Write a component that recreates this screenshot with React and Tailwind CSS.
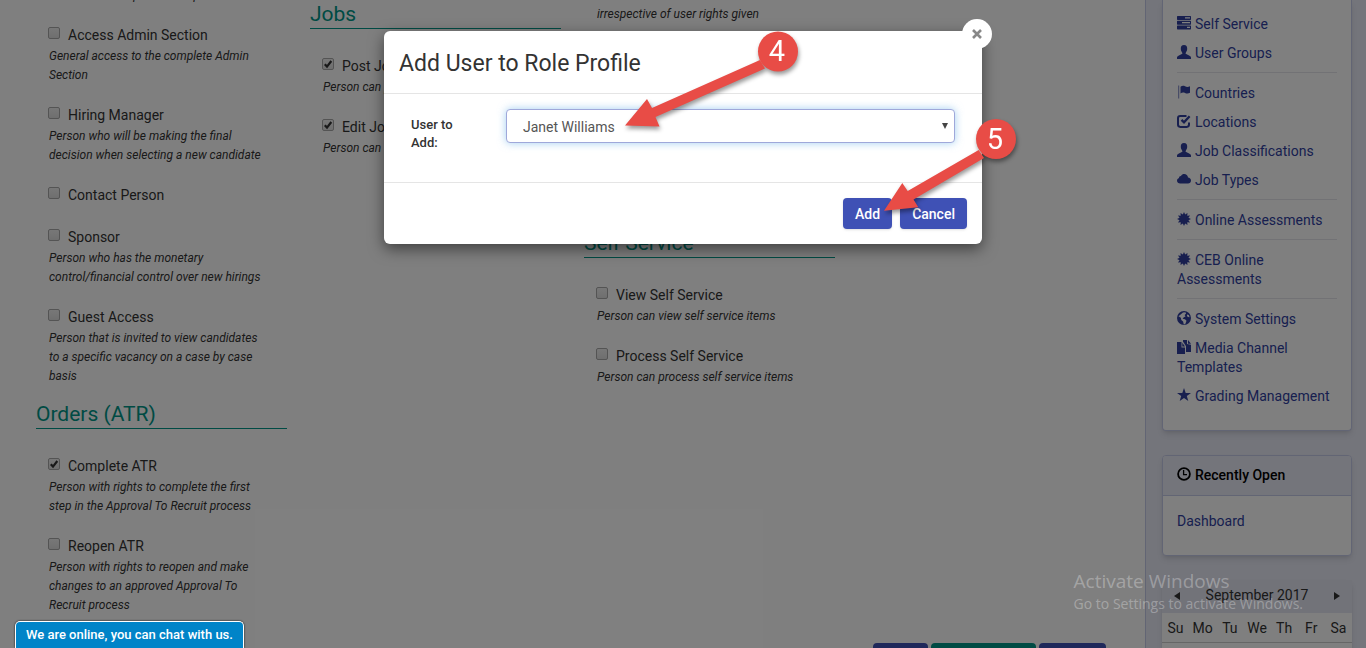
import { useState } from 'react';

const columns = [
  [
    {
      items: [
        { label: 'Report User', hint: ['Person can complete this report'] },
        { label: 'Access Admin Section', hint: ['General access to the complete Admin', 'Section'] },
        { label: 'Hiring Manager', hint: ['Person who will be making the final', 'decision when selecting a new candidate'] },
        { label: 'Contact Person', hint: [] },
        { label: 'Sponsor', hint: ['Person who has the monetary', 'control/financial control over new hirings'] },
        {
          label: 'Guest Access',
          hint: ['Person that is invited to view candidates', 'to a specific vacancy on a case by case', 'basis']
        }
      ]
    },
    {
      title: 'Orders (ATR)',
      items: [
        {
          label: 'Complete ATR',
          checked: true,
          hint: ['Person with rights to complete the first', 'step in the Approval To Recruit process']
        },
        {
          label: 'Reopen ATR',
          hint: ['Person with rights to reopen and make', 'changes to an approved Approval To', 'Recruit process']
        }
      ]
    }
  ],
  [
    { items: [{ label: 'Delete', hint: [] }] },
    {
      title: 'Jobs',
      items: [
        { label: 'Post Jobs', checked: true, hint: ['Person can post jobs'] },
        { label: 'Edit Jobs', checked: true, hint: ['Person can edit jobs'] }
      ]
    }
  ],
  [
    { items: [{ label: 'View All', hint: ['Person can view all records', 'irrespective of user rights given'] }] },
    {
      title: 'Reports',
      items: [
        { label: 'View Reports', hint: ['Person can view reports', 'and export them'] },
        { label: 'Edit Reports', hint: ['Person can edit reports'] }
      ]
    },
    {
      title: 'Self Service',
      items: [
        { label: 'View Self Service', hint: ['Person can view self service items'] },
        { label: 'Process Self Service', hint: ['Person can process self service items'] }
      ]
    }
  ]
];

const menu = [
  [
    { label: 'Self Service', icon: 'tasks' },
    { label: 'User Groups', icon: 'user' }
  ],
  [
    { label: 'Countries', icon: 'flag' },
    { label: 'Locations', icon: 'check' },
    { label: 'Job Classifications', icon: 'user' },
    { label: 'Job Types', icon: 'cloud' }
  ],
  [{ label: 'Online Assessments', icon: 'certificate' }],
  [{ label: 'CEB Online Assessments', icon: 'certificate' }],
  [
    { label: 'System Settings', icon: 'globe' },
    { label: 'Media Channel Templates', icon: 'duplicate' },
    { label: 'Grading Management', icon: 'star' }
  ]
];

// twelve-pointed seal
const sealPoints = Array.from({ length: 24 }, (_, i) => {
  const radius = i % 2 === 0 ? 7 : 4.6;
  const angle = (i * Math.PI) / 12;
  return `${7 + radius * Math.cos(angle)},${7 + radius * Math.sin(angle)}`;
}).join(' ');

const shapes = {
  tasks: (
    <path
      fillRule="evenodd"
      d="M.5 0h13l.5.5v3l-.5.5H.5L0 3.500V.5zM8 1.300v1.200h5V1.300zM.5 4.800h13l.5.5v3l-.5.5H.5L0 8.300v-3zM5 6v1.200h8V6zM.5 9.600h13l.5.5v3l-.5.5H.5l-.5-.5v-3zM10 10.800V12h3v-1.200z"
    />
  ),
  user: (
    <path d="M7 0C4.600 0 3.700 1.700 3.800 3.800c0 1.400.5 2.600 1.300 3.600.4.500.3 1.400-.3 1.700L1 10.900c-.7.400-1 .9-1 1.600V14h14v-1.500c0-.7-.3-1.200-1-1.600L9.200 9.100c-.6-.3-.7-1.200-.3-1.700.8-1 1.300-2.200 1.300-3.600C10.300 1.700 9.400 0 7 0z" />
  ),
  flag: (
    <>
      <path d="M1.200.5h1v13h-1z" opacity=".65" />
      <path d="M3.500 1.800C5 .6 6.600.6 8 1.300c1.600.8 3 .9 5 0v6.500c-1.900 1-3.500.8-5 .1-1.500-.6-3-.6-4.500.5z" />
    </>
  ),
  check: (
    <>
      <path
        d="M9.500 1.900H3.300C2 1.900 1 2.800 1 4.100v6.500c0 1.300 1 2.300 2.300 2.300h6.400c1.300 0 2.300-1 2.300-2.300V8.500"
        fill="none"
        stroke="currentColor"
        strokeWidth="2"
      />
      <path d="M4.500 5.900L7 8.300 12.600 2.300" fill="none" stroke="currentColor" strokeWidth="2.300" />
    </>
  ),
  cloud: (
    <path d="M3.200 11.500C1.400 11.500 0 10.300 0 8.700c0-1.300.8-2.300 2-2.700-.1-1.300.9-2.200 2-2.100C4.700 2.600 5.900 2 7.200 2c2 0 3.600 1.500 3.800 3.400 1.700 0 3 1.400 3 3s-1.300 3.100-3 3.100z" />
  ),
  certificate: <polygon points={sealPoints} />,
  globe: (
    <path
      fillRule="evenodd"
      d="M7 0a7 7 0 1 0 0 14A7 7 0 0 0 7 0zM6 1.600l2.400-.3.700 1.300-1.500 1.500.9 1.300-1.700.8-1.200 1.600 2.400.5 1.500 1.500-1.200 3.100-1.500.5-.7-2.800-1.800-1.600-.4-2.200L1.500 5.200zM10 3.400l1.800.5.800 2.400-1.700-.2-.9-1.200z"
    />
  ),
  duplicate: (
    <path
      fillRule="evenodd"
      d="M0 2h4.500v5.500H8V14H0zM5.300 2.800L8 6.500H5.300zM6 0h4v4l4 .8V12H9V6.200L6.800 2.800 6 1.800zM11 0l3 3.700h-3z"
    />
  ),
  star: <path d="M7 0l1.700 4.900H14L9.800 8l1.500 5L7 10 2.700 13l1.500-5L0 4.900h5.300z" />,
  time: (
    <>
      <circle cx="7" cy="7" r="5.900" fill="none" stroke="currentColor" strokeWidth="1.800" />
      <path d="M6.600 3v4.600H10" fill="none" stroke="currentColor" strokeWidth="1.300" />
    </>
  )
};

const weekdays = ['Su', 'Mo', 'Tu', 'We', 'Th', 'Fr', 'Sa'];

function Icon({ name }) {
  return (
    <svg viewBox="0 0 14 14" className="mr-1 inline-block h-3.5 w-3.5 align-[-1px]" fill="currentColor" aria-hidden="true">
      {shapes[name]}
    </svg>
  );
}

function Permission({ item }) {
  return (
    <div className="mb-5 pl-3">
      <label className="flex h-[22px] items-center pb-[3px] text-sm leading-5 text-[#333]">
        <span className="mr-[7px] mb-[3px] grid h-[13px] w-[13px]">
          <input
            type="checkbox"
            defaultChecked={item.checked}
            className="peer col-start-1 row-start-1 h-3 w-3 appearance-none rounded-xs border border-[#a8a8a8] bg-linear-to-b from-[#f0f0f0] to-[#dedede]"
          />
          <svg viewBox="0 0 12 12" className="pointer-events-none invisible col-start-1 row-start-1 h-3 w-3 peer-checked:visible" aria-hidden="true">
            <path d="M2.800 6.200L5 8.600 9.300 3" fill="none" stroke="#333" strokeWidth="2.200" />
          </svg>
        </span>
        {item.label}
      </label>
      {item.hint.map((line) => (
        <p key={line} className="pl-px text-xs leading-[19px] whitespace-nowrap text-[#333] italic">
          {line}
        </p>
      ))}
    </div>
  );
}

function Section({ section }) {
  return (
    <section>
      {section.title ? (
        <h2 className="mb-[27px] border-b border-[#009688] pb-1.5 text-[21px] leading-4 text-[#009688]">{section.title}</h2>
      ) : null}
      {section.items.map((item) => (
        <Permission key={item.label} item={item} />
      ))}
    </section>
  );
}

function Sidebar() {
  return (
    <aside className="w-[220px] shrink-0 bg-[#e8eaf6] pr-3.5 pl-4 text-sm leading-[19px]">
      <nav className="mb-6 rounded-b-sm border border-t-0 border-[#c5cae9] bg-white px-3.5 pt-[9px] pb-5 text-[#303f9f] shadow-md">
        {menu.map((group, index) => (
          <ul key={group[0].label} className={index > 0 ? 'mt-[5px] border-t border-[#e4e4ea] pt-[5px]' : ''}>
            {group.map((entry) => (
              <li key={entry.label} className="pt-1.5 pb-1">
                <a href="#">
                  <Icon name={entry.icon} />
                  {entry.label}
                </a>
              </li>
            ))}
          </ul>
        ))}
      </nav>

      <section className="mb-6 overflow-hidden rounded-sm border border-[#c5cae9] bg-white shadow-md">
        <h2 className="border-b border-[#c5cae9] bg-[#e8eaf6] px-3.5 py-2.5 font-medium text-black">
          <Icon name="time" />
          Recently Open
        </h2>
        <div className="px-3.5 pt-4 pb-6">
          <a href="#" className="text-[#303f9f]">
            Dashboard
          </a>
        </div>
      </section>

      <section className="bg-white text-[#333] shadow-md">
        <div className="flex h-[33px] items-center justify-between bg-[#e4e6f2] px-3 pb-0.5">
          <button type="button" aria-label="Previous month">
            <svg viewBox="0 0 6 8" className="h-2 w-1.5" fill="currentColor">
              <path d="M6 0v8L0 4z" />
            </svg>
          </button>
          <span>September 2017</span>
          <button type="button" aria-label="Next month">
            <svg viewBox="0 0 6 8" className="h-2 w-1.5" fill="currentColor">
              <path d="M0 0v8l6-4z" />
            </svg>
          </button>
        </div>
        <table className="w-full table-fixed">
          <thead>
            <tr className="border-b border-[#ccc]">
              {weekdays.map((day) => (
                <th key={day} className="h-[29px] pt-[3px] font-normal">
                  {day}
                </th>
              ))}
            </tr>
          </thead>
          <tbody>
            <tr>
              <td colSpan={5} className="h-7" />
              <td className="text-center">1</td>
              <td className="text-center">2</td>
            </tr>
          </tbody>
        </table>
      </section>
    </aside>
  );
}

function Callouts() {
  return (
    <svg
      viewBox="0 0 640 213"
      className="pointer-events-none absolute top-0 left-0 h-[213px] w-[640px] overflow-visible drop-shadow-[1px_3px_2px_rgba(0,0,0,0.4)]"
      fill="#e84c46"
      aria-hidden="true"
    >
      <path d="M241 94.500L263 68l5 9 108-48 5 8.500L271.500 86l4 9.500z" />
      <path d="M500 179.700L518.300 152l5.400 8 71-41 5.300 8-70.500 41.500 4.800 7.800z" />
      <circle cx="394" cy="20.500" r="20" />
      <circle cx="612" cy="108" r="20" />
      <g fill="#fff" fontSize="29" textAnchor="middle">
        <text x="393" y="30">4</text>
        <text x="611" y="118">5</text>
      </g>
    </svg>
  );
}

function AddUserDialog() {
  const [user, setUser] = useState('Janet Williams');

  return (
    <div role="dialog" aria-labelledby="dialog-title" className="relative w-[598px] rounded-md bg-white shadow-[0_5px_15px_rgba(0,0,0,0.5)]">
      <button
        type="button"
        aria-label="Close"
        className="absolute -top-3 -right-2.5 flex h-[30px] w-[30px] items-center justify-center rounded-full bg-white text-[#888]"
      >
        <svg viewBox="0 0 10 10" className="h-2.5 w-2.5" fill="none" stroke="currentColor" strokeWidth="2.600" aria-hidden="true">
          <path d="M1 1l8 8M9 1L1 9" />
        </svg>
      </button>
      <h1 id="dialog-title" className="border-b border-[#e5e5e5] px-[15px] pt-[17px] pb-[13px] text-[23px] leading-8 text-[#333]">
        Add User to Role Profile
      </h1>
      <div className="flex px-[27px] pt-[15px] pb-[30px]">
        <label htmlFor="user" className="w-[95px] shrink-0 pt-[7px] pr-8 text-[13px] leading-[18px] font-medium text-[#333]">
          User to Add:
        </label>
        <div className="grid h-[34px] flex-1 items-center">
          <select
            id="user"
            value={user}
            onChange={(event) => setUser(event.target.value)}
            className="col-start-1 row-start-1 h-[34px] w-full appearance-none rounded-sm border border-[#9fa8da] bg-white px-4 pt-0.5 text-sm text-[#555] shadow-[0_0_8px_rgba(102,175,233,0.6)]"
          >
            <option>Janet Williams</option>
          </select>
          <svg viewBox="0 0 6 6" className="pointer-events-none col-start-1 row-start-1 mr-[7px] h-1.5 w-1.5 justify-self-end" fill="#444" aria-hidden="true">
            <path d="M0 0h6L3 6z" />
          </svg>
        </div>
      </div>
      <div className="flex justify-end gap-2 border-t border-[#e5e5e5] p-[15px] text-sm font-medium text-white">
        <button type="button" className="h-[31px] rounded-sm bg-[#3f51b5] px-3 shadow">
          Add
        </button>
        <button type="button" className="h-[31px] rounded-sm bg-[#3f51b5] px-3 shadow">
          Cancel
        </button>
      </div>
      <Callouts />
    </div>
  );
}

export default function App() {
  return (
    <div className="relative h-screen overflow-hidden bg-white font-[Roboto,sans-serif]">
      <div className="flex min-h-screen">
        <main className="flex-1 border-r border-[#c5cae9] px-9">
          <div className="-mt-9 grid grid-cols-4 gap-[23px]">
            {columns.map((sections, index) => (
              <div key={index}>
                {sections.map((section) => (
                  <Section key={section.title ?? 'top'} section={section} />
                ))}
              </div>
            ))}
          </div>
          <div className="mt-2 flex justify-end gap-[3px] pr-[3px] text-sm font-medium text-white">
            <button type="button" className="h-[31px] w-[55px] rounded-sm bg-[#3f51b5]">
              Save
            </button>
            <button type="button" className="h-[31px] w-[105px] rounded-sm bg-[#009688]">
              Add Users
            </button>
            <button type="button" className="h-[31px] w-[67px] rounded-sm bg-[#3f51b5]">
              Cancel
            </button>
          </div>
        </main>
        <Sidebar />
      </div>

      <div className="absolute inset-0 flex items-start justify-center bg-black/50 pt-[31px]">
        <AddUserDialog />
      </div>

      <div className="pointer-events-none absolute right-[63px] bottom-[33px] font-['Open_Sans',sans-serif] whitespace-nowrap text-white/30">
        <p className="text-[19px] leading-6">Activate Windows</p>
        <p className="text-sm leading-[22px]">Go to Settings to activate Windows.</p>
      </div>

      <button
        type="button"
        className="absolute bottom-0 left-[15px] h-[27px] rounded-t-[5px] border border-b-0 border-white bg-[#0084c8] px-2.5 text-[13px] font-medium text-white shadow-[0_0_2px_#000]"
      >
        We are online, you can chat with us.
      </button>
    </div>
  );
}
